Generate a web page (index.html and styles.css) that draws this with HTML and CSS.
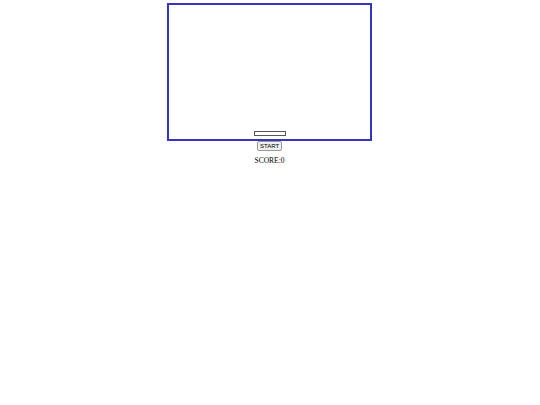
FILE: index.html
```html
<!DOCTYPE html>
<html lang="en">
<head>
    <meta charset="UTF-8">
    <title>Paddle Game</title>
    <link rel="stylesheet" href="styles.css">
</head>
<body>
    <div class="game">
        <div id="board" class="board">
            <div id="paddle" class="paddle"></div>
        </div>
        <button id="start" class="start-btn">START</button>
        <p class="score">SCORE:<span id="score">0</span></p>
    </div>
</body>
</html>
```

FILE: styles.css
```css
body {
    margin: 0;
    padding: 0;
    background-color: #ffffff;
    font-family: "Liberation Serif", serif;
}
.game {
    display: flex;
    flex-direction: column;
    align-items: center;
    padding-top: 3px;
    padding-right: 1px;
}
.board {
    width: 201px;
    height: 131px;
    border: 2px solid #3535c0;
    display: flex;
    justify-content: center;
    align-items: flex-end;
    padding-bottom: 3px;
}
.paddle {
    width: 30px;
    height: 3px;
    border: 1px solid #555;
    background: #fff;
}
.start-btn {
    margin-top: 0;
    font-family: "Liberation Sans", sans-serif;
    font-size: 6px;
    padding: 1px 2px;
    background: #efefef;
    border: 1px solid #999;
    border-radius: 2px;
    color: #000;
}
.score {
    margin: 5px 0 0;
    font-size: 7.5px;
}
```
